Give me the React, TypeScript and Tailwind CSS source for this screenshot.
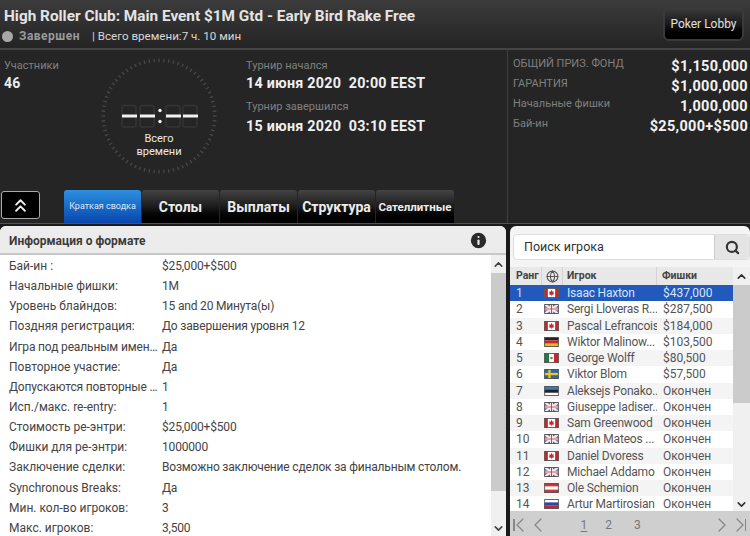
import { ChevronsUp, ChevronUp, ChevronDown, ChevronLeft, ChevronRight, Info, Search, Globe } from "lucide-react";

const formatRows = [
  ["Бай-ин :", "$25,000+$500"],
  ["Начальные фишки:", "1M"],
  ["Уровень блайндов:", "15 and 20 Минута(ы)"],
  ["Поздняя регистрация:", "До завершения уровня 12"],
  ["Игра под реальным имен…", "Да"],
  ["Повторное участие:", "Да"],
  ["Допускаются повторные …", "1"],
  ["Исп./макс. re-entry:", "1"],
  ["Стоимость ре-энтри:", "$25,000+$500"],
  ["Фишки для ре-энтри:", "1000000"],
  ["Заключение сделки:", "Возможно заключение сделок за финальным столом."],
  ["Synchronous Breaks:", "Да"],
  ["Мин. кол-во игроков:", "3"],
  ["Макс. игроков:", "3,500"],
];

const players = [
  ["1", "ca", "Isaac Haxton", "$437,000"],
  ["2", "gb", "Sergi Lloveras R...", "$287,500"],
  ["3", "ca", "Pascal Lefrancois", "$184,000"],
  ["4", "de", "Wiktor Malinow...", "$103,500"],
  ["5", "mx", "George Wolff", "$80,500"],
  ["6", "se", "Viktor Blom", "$57,500"],
  ["7", "ee", "Aleksejs Ponako..", "Окончен"],
  ["8", "gb", "Giuseppe Iadiser..", "Окончен"],
  ["9", "ca", "Sam Greenwood", "Окончен"],
  ["10", "gb", "Adrian Mateos ...", "Окончен"],
  ["11", "ca", "Daniel Dvoress", "Окончен"],
  ["12", "gb", "Michael Addamo", "Окончен"],
  ["13", "at", "Ole Schemion", "Окончен"],
  ["14", "ru", "Artur Martirosian", "Окончен"],
];

const tabs = ["Столы", "Выплаты", "Структура"];

function Flag({ code }: { code: string }) {
  return (
    <svg width="15" height="10" viewBox="0 0 16 11" className="block">
      <rect width="16" height="11" fill="#fff" />
      {code === "ca" && (
        <>
          <rect width="4" height="11" fill="#c8262c" />
          <rect x="12" width="4" height="11" fill="#c8262c" />
          <path d="M8 2l1 2 1.500-.5-.5 2.500 1-.2-1 1.700H8.300V9h-.6V7.500H6l-1-1.700 1 .2-.5-2.500L7 4z" fill="#c8262c" />
        </>
      )}
      {code === "gb" && (
        <>
          <rect width="16" height="11" fill="#5a6aa0" />
          <path d="M0 0l16 11M16 0L0 11" stroke="#f4e8ea" strokeWidth="2.400" />
          <path d="M8 0v11M0 5.500h16" stroke="#fff" strokeWidth="3" />
          <path d="M8 0v11M0 5.500h16" stroke="#d0454c" strokeWidth="1.200" />
        </>
      )}
      {code === "de" && (
        <>
          <rect width="16" height="3.700" fill="#222" />
          <rect y="3.700" width="16" height="3.700" fill="#c8262c" />
          <rect y="7.300" width="16" height="3.700" fill="#e8b820" />
        </>
      )}
      {code === "mx" && (
        <>
          <rect width="5.300" height="11" fill="#1f7a45" />
          <rect x="10.700" width="5.300" height="11" fill="#c8262c" />
          <circle cx="8" cy="5.500" r="1.500" fill="#8a7a4a" />
        </>
      )}
      {code === "se" && (
        <>
          <rect width="16" height="11" fill="#2a6aa8" />
          <rect x="4.500" width="2.500" height="11" fill="#f0c820" />
          <rect y="4.300" width="16" height="2.500" fill="#f0c820" />
        </>
      )}
      {code === "ee" && (
        <>
          <rect width="16" height="3.700" fill="#3a7ab8" />
          <rect y="3.700" width="16" height="3.700" fill="#222" />
        </>
      )}
      {code === "at" && (
        <>
          <rect width="16" height="3.700" fill="#c8363c" />
          <rect y="7.300" width="16" height="3.700" fill="#c8363c" />
        </>
      )}
      {code === "ru" && (
        <>
          <rect y="3.700" width="16" height="3.700" fill="#2a48a8" />
          <rect y="7.300" width="16" height="3.700" fill="#c8262c" />
        </>
      )}
      <rect x="0.500" y="0.500" width="15" height="10" fill="none" stroke="#555" />
    </svg>
  );
}

function Clock() {
  const ticks = Array.from({ length: 72 }, (_, i) => i * 5);
  // ghost digits, then the dashes that read as --:--
  const digitX = [122, 140, 166, 183];
  return (
    <svg width="124" height="124" viewBox="97 54 124 124" className="block">
      {ticks.map((deg) => (
        <line key={deg} x1="159" y1="58.500" x2="159" y2="62" stroke="#484848" strokeWidth="1.300" transform={`rotate(${deg} 159 116)`} />
      ))}
      {digitX.map((x) => (
        <g key={x}>
          <rect x={x} y="105.500" width="14" height="21.500" rx="2" fill="none" stroke="#343434" strokeWidth="1.500" />
          <rect x={x} y="114.500" width="15" height="3" fill="#f2f2f2" />
        </g>
      ))}
      <circle cx="160" cy="110.500" r="1.700" fill="#f2f2f2" />
      <circle cx="160" cy="121.500" r="1.700" fill="#f2f2f2" />
    </svg>
  );
}

function Stat({ label, value }: { label: string; value: string }) {
  return (
    <div className="flex justify-between h-5 items-start">
      <span className="text-[11px] leading-4 text-[#808080]">{label}</span>
      <span className="text-[14.500px] leading-[21px] font-bold text-[#f2f2f2] tracking-[0.3px]">{value}</span>
    </div>
  );
}

export default function App() {
  return (
    <div className="w-[750px] h-[536px] overflow-hidden bg-[#1a1a1a] font-['Roboto',sans-serif]">
      <header className="h-[50px] flex justify-between bg-gradient-to-b from-[#3c3c3c] to-[#242424] border-b-2 border-[#444] pl-1 pr-[6px]">
        <div>
          <h1 className="text-[15.350px] leading-5 mt-1.5 font-bold text-[#e4e4e4]">
            High Roller Club: Main Event $1M Gtd - Early Bird Rake Free
          </h1>
          <div className="flex items-center mt-[2px] text-[12px] leading-4">
            <span className="w-[11px] h-[11px] rounded-full bg-[#a8a8a8] mr-1.5 ml-[-2px]" />
            <span className="font-bold text-[#9a9a9a] tracking-[0.5px] mr-3">Завершен</span>
            <span className="text-[11.600px] text-[#d8d8d8]">| Всего времени:7 ч. 10 мин</span>
          </div>
        </div>
        <button className="self-start mt-[7px] w-[81px] h-[34px] rounded-md border-2 border-[#3a3a3a] bg-gradient-to-b from-[#3a3a3a] via-[#1a1a1a] to-black text-[12px] text-[#e0e0e0]">
          Poker Lobby
        </button>
      </header>

      <section className="h-[174px] flex bg-[#252525] border-b border-[#1a5cb0]">
        <div className="w-[508px] flex flex-col border-r border-[#3f3f3f]">
          <div className="h-[140px] flex">
            <div className="w-[97px] pl-1 pt-[10px]">
              <div className="text-[11px] leading-3 text-[#808080]">Участники</div>
              <div className="text-[14px] leading-4 mt-[3px] font-bold text-[#ececec] tracking-[0.3px]">46</div>
            </div>
            <div className="relative w-[149px] h-[124px] mt-1">
              <Clock />
              <div className="absolute left-0 top-[78px] w-[124px] text-center text-[11px] leading-[13px] text-[#ececec]">
                Всего
                <br />
                времени
              </div>
            </div>
            <div className="pt-[10px]">
              <div className="text-[11px] leading-3 text-[#808080]">Турнир начался</div>
              <div className="text-[14.300px] leading-4 mt-[3px] font-bold text-[#f0f0f0] tracking-[0.25px] whitespace-pre">14 июня 2020  20:00 EEST</div>
              <div className="text-[11px] leading-3 mt-[10px] text-[#808080]">Турнир завершился</div>
              <div className="text-[14.300px] leading-4 mt-[5px] font-bold text-[#f0f0f0] tracking-[0.25px] whitespace-pre">15 июня 2020  03:10 EEST</div>
            </div>
          </div>
          <div className="flex items-end flex-1 pl-px">
            <button className="w-[39px] h-[28px] mb-[4px] mr-[24px] rounded-[3px] border border-[#aaa] bg-black flex items-center justify-center text-[#f0f0f0]">
              <ChevronsUp size={21} strokeWidth={2.200} />
            </button>
            <div className="h-[33px] w-[77px] mr-px rounded-t-[3px] bg-gradient-to-b from-[#2f8fe0] to-[#0a46ae] flex items-center justify-center text-[9px] text-[#dce8f8]">
              Краткая сводка
            </div>
            {tabs.map((t) => (
              <div key={t} className="h-[33px] w-[77px] mr-px pt-0.5 rounded-t-[3px] bg-gradient-to-b from-[#444] via-[#1c1c1c] to-black flex items-center justify-center text-[14px] font-bold text-[#ececec] whitespace-nowrap">
                {t}
              </div>
            ))}
            <div className="h-[33px] w-[78px] pt-0.5 rounded-t-[3px] bg-gradient-to-b from-[#444] via-[#1c1c1c] to-black flex items-center justify-center text-[11.500px] font-bold text-[#ececec]">
              Сателлитные
            </div>
          </div>
        </div>
        <div className="flex-1 pl-[5px] pr-0.5 pt-[6px]">
          <Stat label="ОБЩИЙ ПРИЗ. ФОНД" value="$1,150,000" />
          <Stat label="ГАРАНТИЯ" value="$1,000,000" />
          <Stat label="Начальные фишки" value="1,000,000" />
          <Stat label="Бай-ин" value="$25,000+$500" />
        </div>
      </section>

      <main className="flex gap-1 pt-0.5 h-[312px]">
        <div className="w-[506px] rounded-t-md overflow-hidden bg-white flex flex-col">
          <div className="h-[29px] shrink-0 flex items-center justify-between bg-[#ececec] border-b-2 border-[#c8c8c8] pt-[2px] pl-[9px] pr-[17px]">
            <span className="text-[12px] font-bold text-[#3c3c3c]">Информация о формате</span>
            <Info size={21} className="fill-[#2a2a2a] text-[#ececec]" strokeWidth={2.500} />
          </div>
          <div className="flex flex-1 min-h-0">
            <div className="flex-1 min-w-0 pt-px">
              {formatRows.map(([k, v]) => (
                <div key={k} className="flex h-[20.150px] items-center text-[12px] text-[#444] whitespace-nowrap">
                  <span className={`w-[153px] ml-[9px] ${k.endsWith("…") ? "tracking-[-0.15px]" : ""}`}>{k}</span>
                  <span className="tracking-[-0.18px]">{v}</span>
                </div>
              ))}
            </div>
            <div className="w-[15px] flex flex-col bg-[#f0f0f0] items-center text-[#444]">
              <ChevronUp size={13} strokeWidth={3} className="mt-[3px] mb-[2px] shrink-0" />
              <div className="w-full h-[218px] bg-[#cbcbcb] shrink-0" />
              <div className="flex-1" />
              <ChevronDown size={13} strokeWidth={3} className="mb-px shrink-0" />
            </div>
          </div>
        </div>

        <div className="flex-1 min-w-0 rounded-t-md overflow-hidden bg-[#f4f4f4] flex flex-col">
          <div className="h-[41px] shrink-0 pl-[3px] pt-2">
            <div className="h-[26px] flex rounded-[4px] border border-[#ddd] bg-white overflow-hidden">
              <span className="flex-1 pl-[10px] text-[12.500px] leading-6 text-[#333]">Поиск игрока</span>
              <span className="w-[35px] bg-[#e4e4e4] border-l border-[#ccc] flex items-center justify-center text-[#333]">
                <Search size={15} strokeWidth={3.500} />
              </span>
            </div>
          </div>
          <div className="flex flex-1 min-h-0">
            <div className="flex-1 min-w-0">
              <div className="h-[18px] flex items-center bg-[#e8e8e8] text-[10.500px] font-bold text-[#444]">
                <span className="w-[32px] pl-[6px] h-full flex items-center border-r border-[#d4d4d4]">Ранг</span>
                <span className="w-[21px] h-full flex items-center justify-center border-r border-[#d4d4d4] text-[#555]">
                  <Globe size={13} />
                </span>
                <span className="w-[94px] pl-[4px] h-full flex items-center border-r border-[#d4d4d4]">Игрок</span>
                <span className="pl-[5px]">Фишки</span>
              </div>
              {players.map(([rank, flag, name, chips], i) => (
                <div
                  key={rank}
                  className={`h-[16.250px] flex items-center text-[12px] whitespace-nowrap ${
                    i === 0 ? "bg-[#2159bd] text-[#d8e4f8]" : i % 2 === 0 ? "bg-[#f4f4f4] text-[#555]" : "bg-white text-[#555]"
                  }`}
                >
                  <span className="w-[34px] pl-[6px]">{rank}</span>
                  <span className="w-[23px]"><Flag code={flag} /></span>
                  <span className="w-[90px] mr-[6px] overflow-hidden tracking-[-0.2px]">{name}</span>
                  <span>{chips}</span>
                </div>
              ))}
            </div>
            <div className="w-[17px] flex flex-col items-center bg-[#f0f0f0] text-[#333]">
              <div className="h-[18px] w-full flex items-center justify-center shrink-0">
                <ChevronUp size={13} strokeWidth={3} />
              </div>
              <div className="w-full h-[118px] bg-[#cbcbcb] shrink-0" />
              <div className="flex-1" />
              <ChevronDown size={13} strokeWidth={3} className="shrink-0" />
            </div>
          </div>
          <div className="h-[25px] shrink-0 pt-[3px] bg-[#cfcfcf] flex items-center text-[12px] text-[#777]">
            <span className="flex items-center text-[#888]">
              <span className="w-[1.500px] h-[12px] bg-[#888] ml-[3px]" />
              <ChevronLeft size={24} strokeWidth={1.300} className="-ml-[7px]" />
              <ChevronLeft size={24} strokeWidth={1.300} className="-ml-[6px]" />
            </span>
            <span className="ml-[31px] underline underline-offset-2">1</span>
            <span className="ml-[18px]">2</span>
            <span className="ml-[22px]">3</span>
            <span className="ml-auto flex items-center text-[#888]">
              <ChevronRight size={24} strokeWidth={1.300} />
              <ChevronRight size={24} strokeWidth={1.300} className="-ml-[6px]" />
              <span className="w-[1.500px] h-[12px] bg-[#888] -ml-[7px] mr-[4px]" />
            </span>
          </div>
        </div>
      </main>
    </div>
  );
}
